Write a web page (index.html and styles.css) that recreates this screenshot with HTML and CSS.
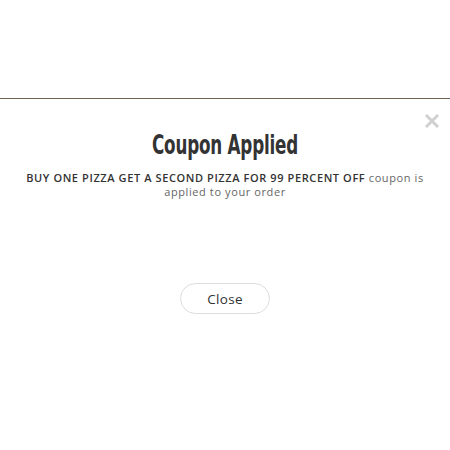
FILE: index.html
```html
<!DOCTYPE html>
<html lang="en">
<head>
    <meta charset="UTF-8">
    <meta name="viewport" content="width=device-width, initial-scale=1.0">
    <title>Coupon Applied</title>
    <link rel="stylesheet" href="styles.css">
</head>
<body>
    <div class="modal">
        <button class="close-x" type="button" aria-label="close">
            <svg width="16" height="16" viewBox="0 0 16 16">
                <path d="M2 2 L14 14 M14 2 L2 14" stroke="#d0d0d0" stroke-width="3" fill="none"/>
            </svg>
        </button>
        <h1 class="title">Coupon Applied</h1>
        <p class="msg"><b>BUY ONE PIZZA GET A SECOND PIZZA FOR 99 PERCENT OFF</b> coupon is applied to your order</p>
        <div class="actions">
            <button class="close-btn" type="button">Close</button>
        </div>
    </div>
</body>
</html>
```

FILE: styles.css
```css
body{
    margin: 0;
    background-color: #fff;
    font-family: "Open Sans", "Liberation Sans", sans-serif;
}
.modal{
    margin-top: 98px;
    border-top: 1px solid #6e6350;
    position: relative;
    padding: 0 20px;
    text-align: center;
}
.close-x{
    position: absolute;
    top: 14px;
    right: 10px;
    background: none;
    border: none;
    padding: 0;
    cursor: pointer;
}
.title{
    margin: 0;
    padding-top: 30px;
    font-family: "DejaVu Sans Condensed", "DejaVu Sans", sans-serif;
    font-weight: bold;
    font-size: 27px;
    line-height: 32px;
    color: #333;
    transform: scaleX(0.69);
    letter-spacing: -0.3px;
}
.msg{
    margin: 10px 0 0;
    font-size: 11px;
    line-height: 14px;
    letter-spacing: 0.6px;
    color: #666;
}
.msg b{
    color: #333;
    font-weight: 600;
}
.actions{
    margin-top: 84px;
}
.close-btn{
    width: 90px;
    height: 31px;
    border: 1px solid #ddd;
    border-radius: 16px;
    background: #fff;
    font-family: "Open Sans", "Liberation Sans", sans-serif;
    font-size: 13.5px;
    letter-spacing: 0.3px;
    color: #333;
}
```
